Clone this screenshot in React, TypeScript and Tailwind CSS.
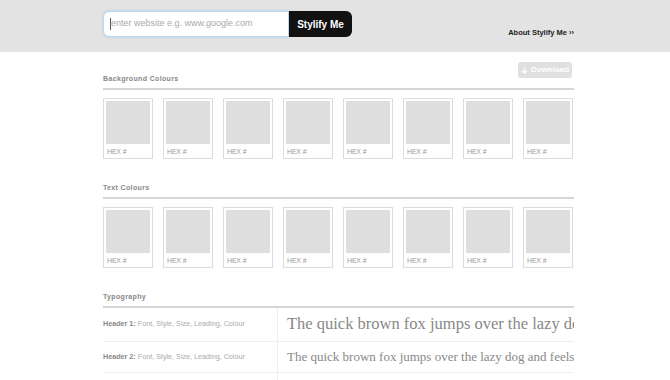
const swatches = Array.from({ length: 8 });

function SwatchRow() {
  return (
    <div className="flex gap-[10px] mt-[8px]">
      {swatches.map((_, i) => (
        <div key={i} className="w-[50px] h-[61px] border border-[#dcdcdc] bg-white p-[2px]">
          <div className="h-[43px] bg-[#dedede]" />
          <div className="text-[7px] leading-none text-[#999] mt-[4px] ml-[1px] tracking-tight">HEX #</div>
        </div>
      ))}
    </div>
  );
}

function SectionTitle({ title }: { title: string }) {
  return (
    <div className="border-b-2 border-[#d6d6d6] pb-[3px]">
      <h2 className="text-[7px] font-bold tracking-[0.05em] text-[#888] leading-[12px]">{title}</h2>
    </div>
  );
}

const typeRows = [
  { label: 'Header 1:', sample: 'The quick brown fox jumps over the lazy dog and feels', size: 'text-[16.5px]', h: 'h-[34px]' },
  { label: 'Header 2:', sample: 'The quick brown fox jumps over the lazy dog and feels good about it', size: 'text-[13px]', h: 'h-[31px]' },
  { label: 'Header 3:', sample: 'The quick brown fox jumps over the lazy dog and feels good about it', size: 'text-[12px]', h: 'h-[31px]' },
];

export default function App() {
  return (
    <div className="w-[670px] h-[380px] overflow-hidden bg-white font-['Liberation_Sans',Arial,sans-serif]">
      <header className="h-[52px] bg-[#e3e3e3]">
        <div className="w-[471px] ml-[103px] flex items-start justify-between pt-[11px]">
          <div className="flex">
            <div className="w-[186px] h-[26px] bg-white border border-[#b9d8f2] rounded-l-[6px] flex items-center pl-[6px] shadow-[0_0_2px_rgba(120,170,220,0.5)]">
              <span className="w-px h-[12px] bg-[#555]" />
              <span className="text-[9px] text-[#aaa]">enter website e.g. www.google.com</span>
            </div>
            <button className="w-[63px] h-[26px] bg-[#111] text-white text-[10px] font-bold rounded-r-[6px]">Stylify Me</button>
          </div>
          <a className="mt-[16px] text-[7.5px] font-bold text-[#222]">About Stylify Me ››</a>
        </div>
      </header>

      <main className="w-[471px] ml-[103px]">
        <div className="flex justify-end pt-[10px] pr-[2px]">
          <div className="h-[16px] w-[54px] rounded-[3px] bg-[#e0e0e0] text-white text-[8px] font-bold flex items-center justify-center gap-[3px]">
            <svg width="7" height="7" viewBox="0 0 8 8" fill="none" stroke="white" strokeWidth="1.4">
              <path d="M4 0.5V7M1.2 4.3L4 7l2.8-2.7" />
            </svg>
            Download
          </div>
        </div>

        <div className="-mt-[5px]">
          <SectionTitle title="Background Colours" />
          <SwatchRow />
        </div>

        <div className="mt-[23px]">
          <SectionTitle title="Text Colours" />
          <SwatchRow />
        </div>

        <div className="mt-[23px]">
          <SectionTitle title="Typography" />
          {typeRows.map((r) => (
            <div key={r.label} className={`flex border-b border-[#efefef] ${r.h}`}>
              <div className="w-[175px] border-r border-[#efefef] flex items-center text-[7.2px] text-[#aaa]">
                <span className="font-bold text-[#888] mr-[2px]">{r.label}</span>Font, Style, Size, Leading, Colour
              </div>
              <div className={`flex-1 overflow-hidden whitespace-nowrap flex items-center pl-[9px] text-[#888] font-['Liberation_Serif',Georgia,serif] ${r.size}`}>
                {r.sample}
              </div>
            </div>
          ))}
        </div>
      </main>
    </div>
  );
}
